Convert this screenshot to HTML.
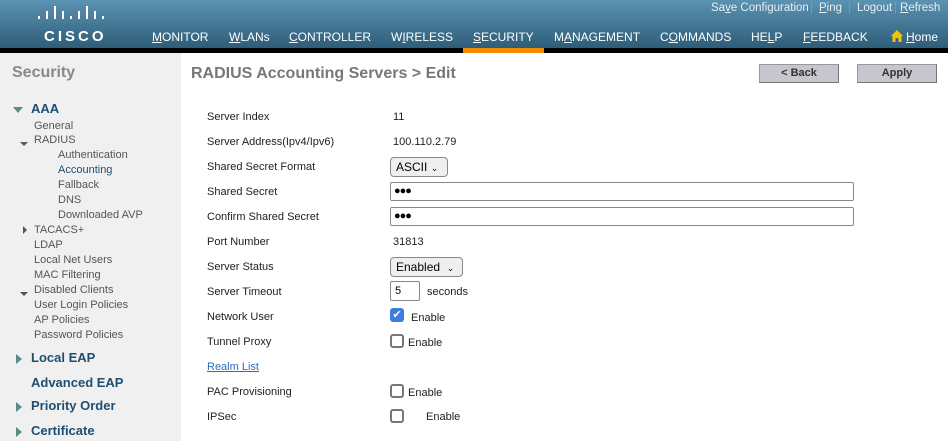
<!DOCTYPE html><html><head><style>
*{margin:0;padding:0;box-sizing:border-box}
body{width:948px;height:441px;overflow:hidden;font-family:"Liberation Sans",sans-serif;background:#fff;position:relative}
.hdr{position:absolute;left:0;top:0;width:948px;height:48px;background:linear-gradient(#5b93b2,#2e5d78)}
.bar{position:absolute;left:0;top:48px;width:948px;height:5px;background:#000}
.or{position:absolute;left:463px;top:48px;width:81px;height:5px;background:#f28c00}
.a{position:absolute;color:#fff;font-size:12px;white-space:nowrap}
.a u{text-decoration:underline}
.tl{position:absolute;color:#e8eef3;font-size:11.5px;top:2px;white-space:nowrap}
.side{position:absolute;left:0;top:53px;width:181px;height:388px;background:#f0f0f0}
.s{position:absolute;font-size:11px;color:#555;white-space:nowrap}
.b{position:absolute;font-size:13px;font-weight:bold;color:#1f4e70;white-space:nowrap}
.l{position:absolute;left:207px;font-size:11px;color:#222}
.v{position:absolute;left:393px;font-size:11px;color:#222}
.tri{position:absolute;width:0;height:0}
.sel{position:absolute;left:390px;height:20px;border:1px solid #888;border-radius:4px;background:#efefef;font-size:12px;padding:2px 0 0 5px}
.inp{position:absolute;left:390px;width:464px;height:19px;border:1px solid #888;border-radius:2px;font-size:11px;padding:2px 0 0 3px;letter-spacing:-1px}
.cb{position:absolute;left:390px;width:14px;height:14px;border:2px solid #777;border-radius:3px}
.en{position:absolute;font-size:11px;color:#222}
.btn{position:absolute;top:64px;height:19px;background:#c6c6ce;border:1px solid #999;border-right-color:#777;border-bottom-color:#777;font-size:11px;font-weight:bold;color:#333;text-align:center;line-height:17px}
.cb2{position:absolute;background:#fff;width:2px}
.sep{color:#7a9ab0}
</style></head><body>
<div class="hdr"></div><div class="bar"></div><div class="or"></div>
<div class="cb2" style="left:38px;top:16px;height:3px"></div>
<div class="cb2" style="left:46px;top:11px;height:8px"></div>
<div class="cb2" style="left:54px;top:6px;height:13px"></div>
<div class="cb2" style="left:62px;top:11px;height:8px"></div>
<div class="cb2" style="left:70px;top:16px;height:3px"></div>
<div class="cb2" style="left:78px;top:11px;height:8px"></div>
<div class="cb2" style="left:86px;top:6px;height:13px"></div>
<div class="cb2" style="left:94px;top:11px;height:8px"></div>
<div class="cb2" style="left:102px;top:16px;height:3px"></div>
<div class="a" style="left:44px;top:28px;font-size:15px;font-weight:bold;letter-spacing:3px">CISCO</div>
<div class="a" style="left:152px;top:30px"><u>M</u>ONITOR</div>
<div class="a" style="left:229px;top:30px"><u>W</u>LANs</div>
<div class="a" style="left:289px;top:30px"><u>C</u>ONTROLLER</div>
<div class="a" style="left:391px;top:30px">W<u>I</u>RELESS</div>
<div class="a" style="left:473px;top:30px"><u>S</u>ECURITY</div>
<div class="a" style="left:554px;top:30px">M<u>A</u>NAGEMENT</div>
<div class="a" style="left:660px;top:30px">C<u>O</u>MMANDS</div>
<div class="a" style="left:751px;top:30px">HE<u>L</u>P</div>
<div class="a" style="left:803px;top:30px"><u>F</u>EEDBACK</div>
<svg style="position:absolute;left:891px;top:30px" width="12" height="12" viewBox="0 0 12 12"><path d="M6 0L0 6H1.5V12H4.5V8H7.5V12H10.5V6H12Z" fill="#f5c400"/></svg>
<div class="a" style="left:906px;top:30px"><u>H</u>ome</div>
<div class="tl" style="left:711px">Sa<u>v</u>e Configuration</div>
<div class="tl sep" style="left:810px">|</div>
<div class="tl" style="left:819px"><u>P</u>ing</div>
<div class="tl sep" style="left:848px">|</div>
<div class="tl" style="left:857px">Logout</div>
<div class="tl sep" style="left:894px">|</div>
<div class="tl" style="left:900px"><u>R</u>efresh</div>
<div class="side"></div>
<div style="position:absolute;left:12px;top:64px;font-size:16px;font-weight:bold;color:#888">Security</div>
<div style="position:absolute;left:191px;top:65px;font-size:16px;font-weight:bold;color:#777">RADIUS Accounting Servers &gt; Edit</div>
<div class="btn" style="left:759px;width:80px">&lt; Back</div>
<div class="btn" style="left:857px;width:80px">Apply</div>
<div class="tri" style="left:13px;top:107px;border-left:5px solid transparent;border-right:5px solid transparent;border-top:6px solid #5a8a8a"></div>
<div class="b" style="left:31px;top:101px">AAA</div>
<div class="s" style="left:34px;top:120px">General</div>
<div class="tri" style="left:20px;top:142px;border-left:4px solid transparent;border-right:4px solid transparent;border-top:4px solid #555"></div>
<div class="s" style="left:34px;top:134px">RADIUS</div>
<div class="s" style="left:58px;top:149px">Authentication</div>
<div class="s" style="left:58px;top:164px;color:#1f4e70">Accounting</div>
<div class="s" style="left:58px;top:179px">Fallback</div>
<div class="s" style="left:58px;top:194px">DNS</div>
<div class="s" style="left:58px;top:209px">Downloaded AVP</div>
<div class="tri" style="left:23px;top:226px;border-top:4px solid transparent;border-bottom:4px solid transparent;border-left:4px solid #555"></div>
<div class="s" style="left:34px;top:224px">TACACS+</div>
<div class="s" style="left:34px;top:239px">LDAP</div>
<div class="s" style="left:34px;top:254px">Local Net Users</div>
<div class="s" style="left:34px;top:269px">MAC Filtering</div>
<div class="tri" style="left:20px;top:292px;border-left:4px solid transparent;border-right:4px solid transparent;border-top:4px solid #555"></div>
<div class="s" style="left:34px;top:284px">Disabled Clients</div>
<div class="s" style="left:34px;top:299px">User Login Policies</div>
<div class="s" style="left:34px;top:314px">AP Policies</div>
<div class="s" style="left:34px;top:329px">Password Policies</div>
<div class="tri" style="left:16px;top:354px;border-top:5px solid transparent;border-bottom:5px solid transparent;border-left:6px solid #5a8a8a"></div>
<div class="b" style="left:31px;top:350px">Local EAP</div>
<div class="b" style="left:31px;top:375px">Advanced EAP</div>
<div class="tri" style="left:16px;top:402px;border-top:5px solid transparent;border-bottom:5px solid transparent;border-left:6px solid #5a8a8a"></div>
<div class="b" style="left:31px;top:398px">Priority Order</div>
<div class="tri" style="left:16px;top:427px;border-top:5px solid transparent;border-bottom:5px solid transparent;border-left:6px solid #5a8a8a"></div>
<div class="b" style="left:31px;top:423px">Certificate</div>

<div class="l" style="top:111px">Server Index</div><div class="v" style="top:111px">11</div>
<div class="l" style="top:136px">Server Address(Ipv4/Ipv6)</div><div class="v" style="top:136px">100.110.2.79</div>
<div class="l" style="top:161px">Shared Secret Format</div>
<div class="sel" style="top:157px;width:58px">ASCII <span style="font-size:9px">&#8964;</span></div>
<div class="l" style="top:186px">Shared Secret</div><div class="inp" style="top:182px">●●●</div>
<div class="l" style="top:211px">Confirm Shared Secret</div><div class="inp" style="top:207px">●●●</div>
<div class="l" style="top:236px">Port Number</div><div class="v" style="top:236px">31813</div>
<div class="l" style="top:261px">Server Status</div>
<div class="sel" style="top:257px;width:73px">Enabled &nbsp;<span style="font-size:9px">&#8964;</span></div>
<div class="l" style="top:286px">Server Timeout</div>
<div style="position:absolute;left:390px;top:281px;width:30px;height:20px;border:1px solid #888;border-radius:2px;font-size:11px;padding:3px 0 0 4px">5</div>
<div class="en" style="left:427px;top:286px">seconds</div>
<div class="l" style="top:311px">Network User</div>
<div style="position:absolute;left:390px;top:308px;width:14px;height:14px;background:#3b7de0;border-radius:3px;color:#fff;font-size:11px;line-height:14px;text-align:center">✔</div>
<div class="en" style="left:411px;top:312px">Enable</div>
<div class="l" style="top:336px">Tunnel Proxy</div><div class="cb" style="top:334px"></div><div class="en" style="left:408px;top:337px">Enable</div>
<div class="l" style="top:361px;color:#2a6ebb;text-decoration:underline">Realm List</div>
<div class="l" style="top:386px">PAC Provisioning</div><div class="cb" style="top:384px"></div><div class="en" style="left:408px;top:387px">Enable</div>
<div class="l" style="top:411px">IPSec</div><div class="cb" style="top:409px"></div><div class="en" style="left:426px;top:411px">Enable</div>
</body></html>
